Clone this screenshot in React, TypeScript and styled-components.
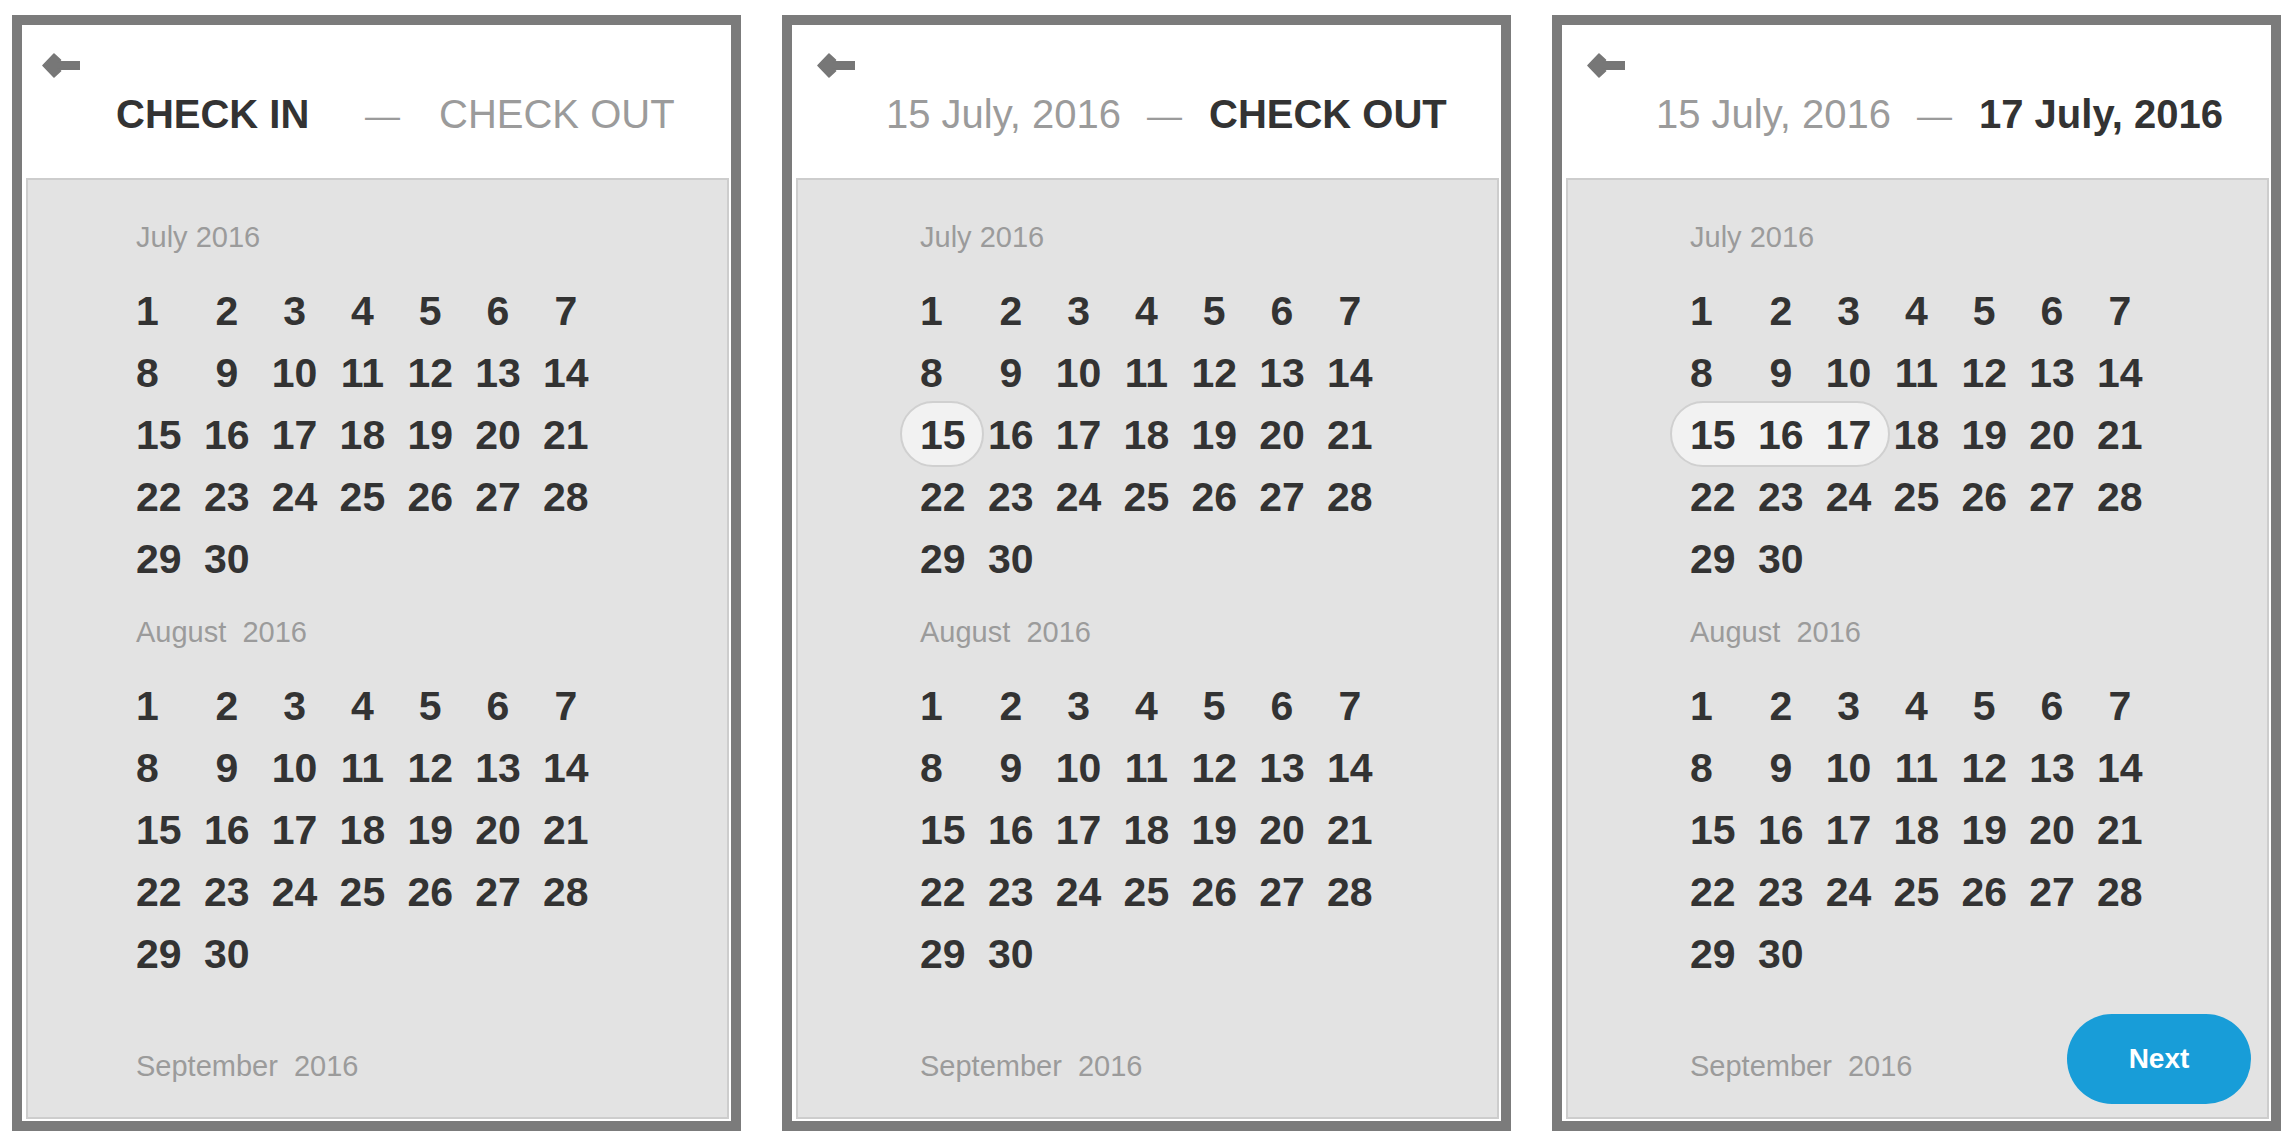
import React from "react";
import styled, { createGlobalStyle } from "styled-components";

type Range = { month: number; from: number; to: number };

type PanelData = {
  left: string;
  right: string;
  active: "left" | "right";
  range?: Range;
  inset: number;
  arrowInset: number;
  next?: boolean;
};

const months = [
  { label: "July 2016", days: 30, after: 25 },
  { label: "August  2016", days: 30, after: 64 },
  { label: "September  2016", days: 0, after: 0 },
];

const panels: PanelData[] = [
  { left: "CHECK IN", right: "CHECK OUT", active: "left", inset: 108, arrowInset: 16 },
  {
    left: "15 July, 2016",
    right: "CHECK OUT",
    active: "right",
    range: { month: 0, from: 15, to: 15 },
    inset: 122,
    arrowInset: 21,
  },
  {
    left: "15 July, 2016",
    right: "17 July, 2016",
    active: "right",
    range: { month: 0, from: 15, to: 17 },
    inset: 122,
    arrowInset: 21,
    next: true,
  },
];

const BackArrow = () => (
  <ArrowIcon viewBox="0 0 38 27" aria-hidden="true">
    <path
      d="M1 13.5 L12 2 L18.5 8 L16 9.7 L37.5 9.7 L37.5 17.3 L16 17.3 L18.5 19 L12 25 Z"
      fill="#777"
      stroke="#777"
      strokeWidth="1.6"
      strokeLinejoin="round"
    />
  </ArrowIcon>
);

const Month = ({
  label,
  days,
  after,
  range,
}: {
  label: string;
  days: number;
  after: number;
  range?: { from: number; to: number };
}) => (
  <MonthBlock $after={after}>
    <MonthTitle>{label}</MonthTitle>
    {days > 0 && (
      <DayGrid>
        {range && (
          <Selection
            $col={((range.from - 1) % 7) + 1}
            $row={Math.floor((range.from - 1) / 7) + 1}
            $span={range.to - range.from + 1}
          />
        )}
        {Array.from({ length: days }, (_, i) => (
          <Day key={i} $col={(i % 7) + 1} $row={Math.floor(i / 7) + 1}>
            {i + 1}
          </Day>
        ))}
      </DayGrid>
    )}
  </MonthBlock>
);

const Panel = ({ data }: { data: PanelData }) => (
  <Frame>
    <Header $inset={data.arrowInset}>
      <BackArrow />
      <Title $shift={94 - data.arrowInset - 4}>
        <LeftSlot>
          <DateText $active={data.active === "left"}>{data.left}</DateText>
          <Dash>—</Dash>
        </LeftSlot>
        <DateText $active={data.active === "right"}>{data.right}</DateText>
      </Title>
    </Header>
    <Calendar $inset={data.inset}>
      {months.map((m, i) => (
        <Month
          key={m.label}
          label={m.label}
          days={m.days}
          after={m.after}
          range={data.range && data.range.month === i ? data.range : undefined}
        />
      ))}
      {data.next && <NextButton>Next</NextButton>}
    </Calendar>
  </Frame>
);

const App = () => (
  <>
    <GlobalStyle />
    <Page>
      {panels.map((p, i) => (
        <Panel key={i} data={p} />
      ))}
    </Page>
  </>
);

export default App;

const GlobalStyle = createGlobalStyle`
  html, body {
    margin: 0;
    background: #ffffff;
    font-family: "Liberation Sans", Arial, Helvetica, sans-serif;
  }
`;

const Page = styled.main`
  display: flex;
  gap: 41px;
  padding: 15px 0 0 12px;
`;

const Frame = styled.section`
  width: 729px;
  height: 1116px;
  box-sizing: border-box;
  border: 10px solid #7b7b7b;
  background: #ffffff;
  padding: 0 2px 2px 4px;
  display: flex;
  flex-direction: column;
  flex-shrink: 0;
`;

const Header = styled.header<{ $inset: number }>`
  height: 153px;
  box-sizing: border-box;
  padding: 27px 0 0 ${(p) => p.$inset}px;
  flex-shrink: 0;
`;

const ArrowIcon = styled.svg`
  display: block;
  width: 38px;
  height: 27px;
`;

const Title = styled.div<{ $shift: number }>`
  display: flex;
  align-items: baseline;
  margin: 11px 0 0 ${(p) => p.$shift}px;
  font-size: 40px;
  line-height: 48px;
  white-space: nowrap;
`;

const LeftSlot = styled.div`
  display: flex;
  align-items: baseline;
  width: 323px;
  flex-shrink: 0;
`;

const DateText = styled.span<{ $active: boolean }>`
  min-width: 223px;
  font-weight: ${(p) => (p.$active ? 700 : 400)};
  color: ${(p) => (p.$active ? "#333333" : "#9b9b9b")};
`;

const Dash = styled.span`
  margin-left: 26px;
  font-size: 35px;
  color: #9b9b9b;
`;

const Calendar = styled.div<{ $inset: number }>`
  position: relative;
  flex: 1;
  min-height: 0;
  overflow: hidden;
  background: #e3e3e3;
  border: 2px solid #cdcdcd;
  padding: 40px 0 0 ${(p) => p.$inset}px;
`;

const MonthBlock = styled.div<{ $after: number }>`
  margin-bottom: ${(p) => p.$after}px;
`;

const MonthTitle = styled.div`
  font-size: 29px;
  line-height: 34px;
  color: #9b9b9b;
  white-space: pre;
`;

const DayGrid = styled.div`
  display: grid;
  grid-template-columns: repeat(7, 46px);
  grid-auto-rows: 62px;
  column-gap: 21.8px;
  margin-top: 26px;
`;

const Selection = styled.div<{ $col: number; $row: number; $span: number }>`
  grid-column: ${(p) => p.$col} / span ${(p) => p.$span};
  grid-row: ${(p) => p.$row};
  margin: -3px -18px -1px -20px;
  background: #f2f2f2;
  border: 2px solid #d0d0d0;
  border-radius: 34px;
`;

const Day = styled.span<{ $col: number; $row: number }>`
  grid-column: ${(p) => p.$col};
  grid-row: ${(p) => p.$row};
  justify-self: ${(p) => (p.$col === 1 ? "start" : "center")};
  z-index: 1;
  font-size: 41px;
  line-height: 62px;
  font-weight: 700;
  color: #333333;
`;

const NextButton = styled.button`
  position: absolute;
  right: 16px;
  bottom: 13px;
  width: 184px;
  height: 90px;
  border: none;
  border-radius: 45px;
  background: #189dd8;
  color: #ffffff;
  font-family: inherit;
  font-size: 28px;
  font-weight: 700;
  cursor: pointer;
`;
